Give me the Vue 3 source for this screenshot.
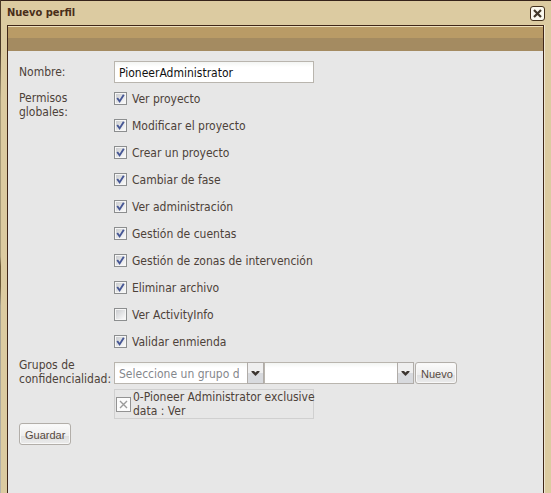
<script setup>
import { ref } from 'vue'

const name = ref('PioneerAdministrator')
const group = ref('')
const access = ref('')

const permissions = ref([
  { id: 'view-project', label: 'Ver proyecto', checked: true },
  { id: 'edit-project', label: 'Modificar el proyecto', checked: true },
  { id: 'create-project', label: 'Crear un proyecto', checked: true },
  { id: 'change-phase', label: 'Cambiar de fase', checked: true },
  { id: 'view-admin', label: 'Ver administración', checked: true },
  { id: 'manage-users', label: 'Gestión de cuentas', checked: true },
  { id: 'manage-areas', label: 'Gestión de zonas de intervención', checked: true },
  { id: 'remove-file', label: 'Eliminar archivo', checked: true },
  { id: 'activity-info', label: 'Ver ActivityInfo', checked: false },
  { id: 'validate', label: 'Validar enmienda', checked: true },
])
</script>

<template>
  <div class="window">
    <header class="titlebar">
      <h1 class="title">Nuevo perfil</h1>
      <button class="close" type="button" aria-label="Cerrar">
        <svg viewBox="0 0 15 15" width="15" height="15" aria-hidden="true">
          <rect x="0.5" y="0.5" width="14" height="14" rx="2.5" fill="#fbf9f0" stroke="#43301c" />
          <path d="M4 4L11 11M11 4L4 11" stroke="#43382a" stroke-width="2.2" fill="none" />
        </svg>
      </button>
    </header>
    <main class="body">
      <div class="band"></div>
      <form class="form" @submit.prevent>
        <label class="label name-label" for="name">Nombre:</label>
        <input id="name" v-model="name" class="text" type="text" />

        <span id="perms" class="label perms-label">Permisos globales:</span>
        <div class="checks" role="group" aria-labelledby="perms">
          <label v-for="p in permissions" :key="p.id" class="check" :for="p.id">
            <input :id="p.id" v-model="p.checked" class="native" type="checkbox" />
            <svg class="box" viewBox="0 0 13 13" width="13" height="13" aria-hidden="true">
              <defs>
                <linearGradient :id="'g-' + p.id" x1="0" y1="0" x2="1" y2="1">
                  <stop offset="0" stop-color="#cbcdd0" />
                  <stop offset="1" stop-color="#fafafa" />
                </linearGradient>
              </defs>
              <rect x="0.5" y="0.5" width="12" height="12" fill="#f6f6f6" stroke="#8c8e8f" />
              <rect x="2" y="2" width="9" height="9" :fill="'url(#g-' + p.id + ')'" />
              <path v-if="p.checked" d="M3.2 6L5.6 9.4L9.8 2.8" fill="none" stroke="#465795" stroke-width="1.9" />
            </svg>
            <span>{{ p.label }}</span>
          </label>
        </div>

        <label class="label groups-label" for="group">Grupos de confidencialidad:</label>
        <div class="groups">
          <div class="pickers">
            <div class="combo">
              <select id="group" v-model="group" class="select">
                <option value="">Seleccione un grupo de confidencialidad</option>
              </select>
              <span class="arrow">
                <svg viewBox="0 0 9 7" width="9" height="7" aria-hidden="true">
                  <path d="M0.500 1H3L4.500 2.500L6 1H8.500V2L4.500 6L0.500 2Z" fill="#3b3530" />
                </svg>
              </span>
            </div>
            <div class="combo">
              <select v-model="access" class="select" aria-label="Permiso">
                <option value=""></option>
              </select>
              <span class="arrow">
                <svg viewBox="0 0 9 7" width="9" height="7" aria-hidden="true">
                  <path d="M0.500 1H3L4.500 2.500L6 1H8.500V2L4.500 6L0.500 2Z" fill="#3b3530" />
                </svg>
              </span>
            </div>
            <button class="button new" type="button">Nuevo</button>
          </div>
          <div class="item">
            <button class="remove" type="button" aria-label="Eliminar">
              <svg viewBox="0 0 15 15" width="15" height="15" aria-hidden="true">
                <rect x="0.5" y="0.5" width="14" height="14" fill="#fcfcfc" stroke="#939393" />
                <path d="M4 4L11 11M11 4L4 11" stroke="#9a9a9a" stroke-width="1.400" fill="none" />
              </svg>
            </button>
            <span class="item-text">0-Pioneer Administrator exclusive<br />data : Ver</span>
          </div>
        </div>

        <button class="button save" type="submit">Guardar</button>
      </form>
    </main>
  </div>
</template>

<style>
body {
  background: linear-gradient(#4a3826 10%, #a79a78 20%, #a79a78 52%, #6b5836 54%, #6b5836 58%, #a5a08e 62%, #b5b3ac);
}
</style>

<style scoped>
.window {
  box-sizing: border-box;
  min-height: 100vh;
  display: flex;
  flex-direction: column;
  margin-left: 1px;
  padding: 0 6px;
  border-top: 1px solid #35221a;
  background: #dccba1;
  color: #4d4239;
  font: 12px/14px "DejaVu Sans Condensed", "DejaVu Sans", sans-serif;
}
.titlebar {
  display: flex;
  align-items: center;
  justify-content: space-between;
  height: 24px;
}
.title {
  margin: 0;
  font-size: 11px;
  font-weight: bold;
  color: #492d19;
}
.close,
.remove {
  display: block;
  flex: none;
  width: 15px;
  height: 15px;
  padding: 0;
  border: 0;
  background: none;
}
.close svg,
.remove svg {
  display: block;
}
.body {
  flex: 1;
  margin-right: 1px;
  border: 1px solid #402618;
  border-bottom: 0;
  background: #e7e7e7;
  box-shadow: 1px 0 #eee6d2;
}
.band {
  height: 24px;
  border-top: 1px solid #eee0bc;
  background: linear-gradient(#b99b66 11px, #a48b61 11px);
}
.form {
  display: grid;
  grid-template-columns: 95px minmax(0, 1fr);
  padding: 10px 11px;
  justify-items: start;
}
.label {
  width: 90px;
}
.name-label,
.groups-label {
  padding-top: 4px;
}
.groups-label {
  padding-top: 3px;
}
.perms-label {
  padding-top: 8px;
}
.text {
  box-sizing: border-box;
  width: 200px;
  height: 22px;
  padding: 2px 4px 0;
  border: 1px solid #b9b5ae;
  background: linear-gradient(#f3f5f3, #fff 5px);
  color: #111;
  font: inherit;
  outline: 0;
}
.checks {
  padding-top: 2px;
}
.check {
  display: flex;
  align-items: center;
  gap: 5px;
  height: 27px;
}
.native {
  position: absolute;
  width: 13px;
  height: 13px;
  margin: 0;
  opacity: 0;
}
.box {
  flex: none;
}
.groups {
  padding-top: 7px;
}
.pickers {
  display: flex;
}
.combo {
  display: flex;
  width: 150px;
}
.select {
  appearance: none;
  box-sizing: border-box;
  flex: 1;
  min-width: 0;
  height: 22px;
  padding: 2px 8px 0 4px;
  border: 1px solid #b9b5ae;
  border-right: 0;
  border-radius: 0;
  background: linear-gradient(#f3f5f3, #fff 5px);
  color: #85878c;
  font: inherit;
  outline: 0;
}
.arrow {
  box-sizing: border-box;
  display: grid;
  place-items: center;
  width: 17px;
  height: 22px;
  border: 1px solid #b0aca8;
  background: linear-gradient(#efefef 50%, #d8dade 50%);
  pointer-events: none;
}
.button {
  box-sizing: border-box;
  height: 22px;
  padding: 2px 5px 0;
  border: 1px solid #b2aea9;
  border-radius: 3px;
  background: linear-gradient(#fbfbfb, #eee 60%, #dedfe0 60%, #ececec);
  box-shadow: inset 0 0 0 1px #f8f8f8;
  color: #574a3f;
  font: 11px/14px "Liberation Sans", Arial, sans-serif;
}
.new {
  width: 42px;
  margin-left: 1px;
}
.save {
  width: 52px;
  margin-top: 4px;
}
.item {
  box-sizing: border-box;
  display: flex;
  align-items: center;
  gap: 2px;
  width: 200px;
  margin-top: 5px;
  padding-left: 1px;
  border: 1px solid #d0d0d0;
}
.item-text {
  white-space: nowrap;
}
</style>
